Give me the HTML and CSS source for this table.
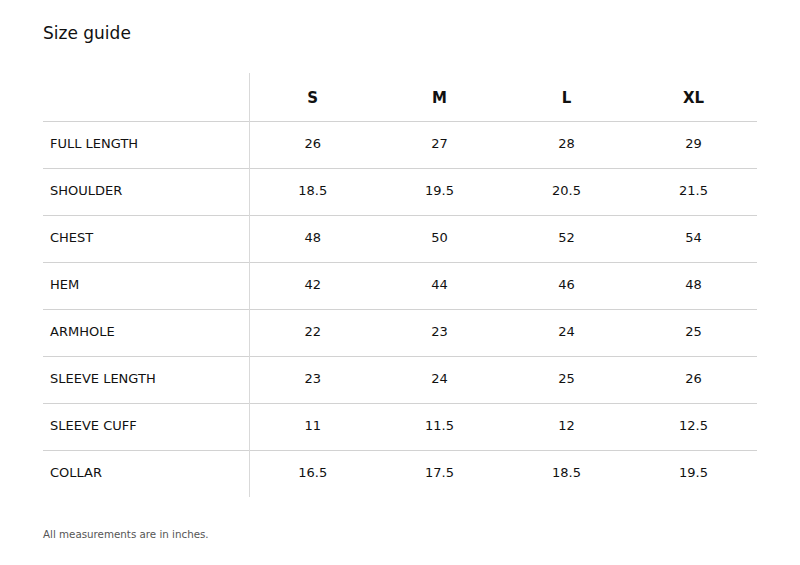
FILE: index.html
```html
<!DOCTYPE html>
<html>
<head>
<meta charset="utf-8">
<link rel="stylesheet" href="styles.css">
</head>
<body>
<div class="page">
  <h1 class="title">Size guide</h1>
  <table class="sizes">
    <thead>
      <tr><th class="label"></th><th>S</th><th>M</th><th>L</th><th>XL</th></tr>
    </thead>
    <tbody>
      <tr><td class="label">FULL LENGTH</td><td>26</td><td>27</td><td>28</td><td>29</td></tr>
      <tr><td class="label">SHOULDER</td><td>18.5</td><td>19.5</td><td>20.5</td><td>21.5</td></tr>
      <tr><td class="label">CHEST</td><td>48</td><td>50</td><td>52</td><td>54</td></tr>
      <tr><td class="label">HEM</td><td>42</td><td>44</td><td>46</td><td>48</td></tr>
      <tr><td class="label">ARMHOLE</td><td>22</td><td>23</td><td>24</td><td>25</td></tr>
      <tr><td class="label">SLEEVE LENGTH</td><td>23</td><td>24</td><td>25</td><td>26</td></tr>
      <tr><td class="label">SLEEVE CUFF</td><td>11</td><td>11.5</td><td>12</td><td>12.5</td></tr>
      <tr><td class="label">COLLAR</td><td>16.5</td><td>17.5</td><td>18.5</td><td>19.5</td></tr>
    </tbody>
  </table>
  <p class="note">All measurements are in inches.</p>
</div>
</body>
</html>
```
FILE: styles.css
```css
html, body {
  margin: 0;
  padding: 0;
  background: #fff;
}
body {
  font-family: "DejaVu Sans", sans-serif;
  color: #111;
}
.page {
  padding: 22px 43px 0 43px;
}
.title {
  margin: 0;
  font-size: 17px;
  font-weight: normal;
  line-height: 22px;
}
.sizes {
  margin-top: 29px;
  width: 714px;
  border-collapse: collapse;
  table-layout: fixed;
  font-size: 13px;
}
.sizes th, .sizes td {
  padding: 0;
  text-align: center;
}
.sizes th {
  height: 46px;
  padding-top: 2px;
  font-size: 15px;
  font-weight: bold;
}
.sizes td {
  height: 43px;
  padding-bottom: 3px;
  border-top: 1px solid #d2d2d2;
}
.sizes .label {
  width: 206px;
  text-align: left;
  padding-left: 7px;
  box-sizing: border-box;
  border-right: 1px solid #d9d9d9;
}
.note {
  margin: 31px 0 0 0;
  font-size: 10.3px;
  color: #555;
}
```
